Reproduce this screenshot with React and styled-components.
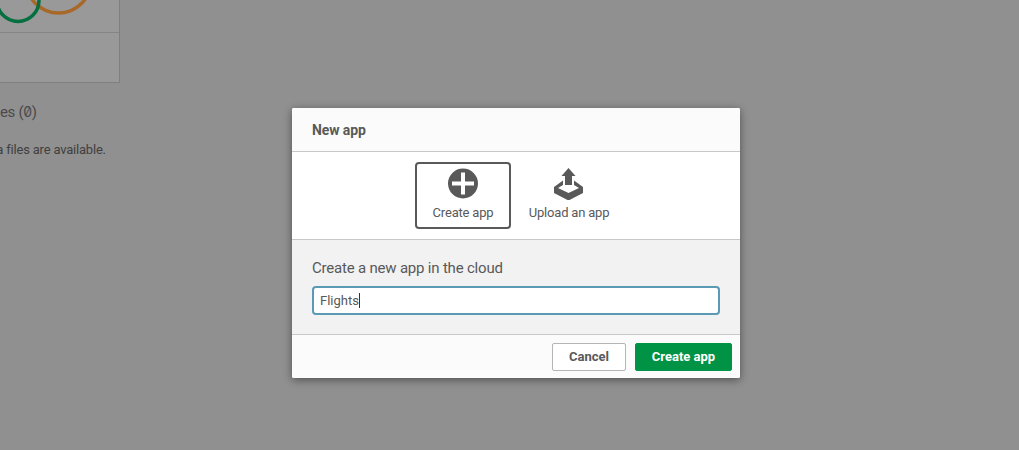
import React from "react";
import styled, { createGlobalStyle } from "styled-components";

const Global = createGlobalStyle`
  html, body { margin: 0; padding: 0; height: 100%; overflow: hidden; background: #909090; }
  body { font-family: "Roboto", "Liberation Sans", sans-serif; }
`;
const Page = styled.div`
  width: 1019px; height: 450px; overflow: hidden; background: #909090;
  display: flex; flex-direction: column; position: relative;
`;
const AppCard = styled.div`
  width: 120px; height: 83px; box-sizing: border-box; flex: none;
  border-right: 1px solid #7f7f7f; border-bottom: 1px solid #7f7f7f;
  background: #999; display: flex; flex-direction: column;
`;
const Thumb = styled.div`
  height: 33px; box-sizing: border-box; border-bottom: 1px solid #848484; flex: none; overflow: hidden;
  svg { display: block; }
`;
const SectionTitle = styled.div`
  margin: 20px 0 0 -45px; font-size: 15px; line-height: 18px; color: #4a4a4a; white-space: nowrap;
  letter-spacing: -0.3px;
`;
const SlashedZero = styled.span`
  font-family: "Inter", sans-serif; font-size: 14px; font-feature-settings: "zero";
`;
const EmptyNote = styled.div`
  margin: 21px 0 0 -41px; font-size: 13px; line-height: 16px; color: #404040; white-space: nowrap;
  letter-spacing: -0.2px;
`;
const ModalShadow = styled.div`
  position: absolute; left: 292px; top: 108px; width: 448px; height: 270px;
  border-radius: 2px; box-shadow: 0 2px 8px rgba(0,0,0,.45);
`;
const Modal = styled.div`
  position: absolute; left: 292px; top: 108px; width: 448px; height: 270px;
  display: flex; flex-direction: column; background: #fff; border-radius: 2px; overflow: hidden;
`;
const Header = styled.div`
  height: 44px; box-sizing: border-box; flex: none; background: #fbfbfb; border-bottom: 1px solid #c8c8c8;
  padding: 0 20px; display: flex; align-items: center;
  font-size: 14px; font-weight: 700; color: #595959; letter-spacing: -0.1px;
`;
const Tabs = styled.div`
  height: 88px; box-sizing: border-box; flex: none; background: #fff; border-bottom: 1px solid #c8c8c8;
  padding: 10px 0 0 123px; display: flex; align-items: flex-start;
`;
const Tab = styled.div`
  width: ${p => p.$w}px; height: 67px; box-sizing: border-box; border-radius: 4px;
  border: 2px solid ${p => (p.$active ? "#595959" : "transparent")};
  display: flex; flex-direction: column; align-items: center; padding-top: 4px;
  color: #595959; font-size: 13px;
  svg { display: block; }
`;
const TabLabel = styled.span`
  margin-top: 5px; line-height: 16px; white-space: nowrap; letter-spacing: -0.2px;
`;
const Body = styled.div`
  height: 95px; box-sizing: border-box; flex: none; background: #f2f2f2; border-bottom: 1px solid #c8c8c8;
  padding: 19px 20px 0; display: flex; flex-direction: column;
`;
const FieldLabel = styled.div`
  font-size: 15px; line-height: 18px; color: #595959; letter-spacing: -0.2px;
`;
const NameInput = styled.div`
  margin-top: 9px; width: 408px; height: 29px; box-sizing: border-box; background: #fff;
  border: 2px solid #5a9ab5; border-radius: 4px; padding: 0 6px; display: flex; align-items: center;
  font-size: 13px; color: #595959;
`;
const Caret = styled.span`
  display: inline-block; width: 1px; height: 15px; background: #333;
`;
const Footer = styled.div`
  flex: 1; background: #fbfbfb; display: flex; justify-content: flex-end; align-items: flex-start;
  padding: 8px 8px 0 0; gap: 9px;
`;
const Button = styled.div`
  height: 28px; width: ${p => p.$w}px; box-sizing: border-box; border-radius: 2px; padding-bottom: 1px;
  display: flex; align-items: center; justify-content: center;
  font-size: 13px; font-weight: 700;
  border: 1px solid ${p => (p.$primary ? "#009345" : "#b5b5b5")};
  background: ${p => (p.$primary ? "#009345" : "#fff")};
  color: ${p => (p.$primary ? "#fff" : "#595959")};
`;

export default function App() {
  return (
    <Page>
      <Global />
      <AppCard>
        <Thumb>
          <svg width="119" height="32" viewBox="0 0 119 32">
            <circle cx="58.5" cy="-19.5" r="32.5" fill="none" stroke="#a8682a" strokeWidth="3.5" />
            <circle cx="18" cy="0.5" r="21" fill="none" stroke="#05703f" strokeWidth="3.5" />
          </svg>
        </Thumb>
      </AppCard>
      <SectionTitle>Data files (<SlashedZero>0</SlashedZero>)</SectionTitle>
      <EmptyNote>No data files are available.</EmptyNote>
      <ModalShadow />
      <Modal>
        <Header>New app</Header>
        <Tabs>
          <Tab $active $w={96}>
            <svg width="32" height="32" viewBox="0 0 32 32">
              <circle cx="16" cy="15.5" r="15" fill="#595959" />
              <path d="M14 4.500h4v9h9v4h-9v9h-4v-9H5v-4h9z" fill="#fff" />
            </svg>
            <TabLabel>Create app</TabLabel>
          </Tab>
          <Tab $w={116}>
            <svg width="32" height="32" viewBox="0 0 32 32">
              <path d="M15.500 0l7 8H19v9h-7V8H8.500z" fill="#595959" />
              <path d="M1 19l9-6.500V17l-5 3 10.500 5L26 20l-5-3v-4.500l9 6.500v6l-14.500 7.500L1 25z" fill="#595959" />
            </svg>
            <TabLabel>Upload an app</TabLabel>
          </Tab>
        </Tabs>
        <Body>
          <FieldLabel>Create a new app in the cloud</FieldLabel>
          <NameInput>Flights<Caret /></NameInput>
        </Body>
        <Footer>
          <Button $w={74}>Cancel</Button>
          <Button $primary $w={97}>Create app</Button>
        </Footer>
      </Modal>
    </Page>
  );
}
